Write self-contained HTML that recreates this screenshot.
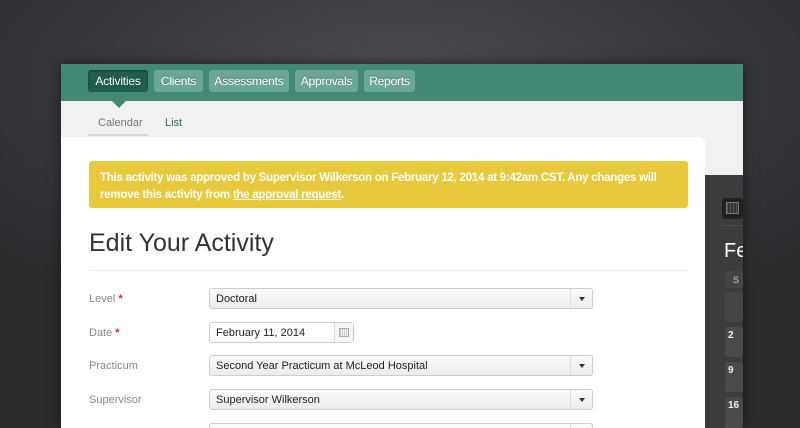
<!DOCTYPE html>
<html><head><style>
*{margin:0;padding:0;box-sizing:border-box}
html{width:800px;height:428px;overflow:hidden}
body{width:800px;height:428px;overflow:hidden;position:relative;font-family:"Liberation Sans",Arial,sans-serif;background:radial-gradient(ellipse 70% 60% at 50% 20%,#4a4c4f,#35373a 60%,#2b2c2e)}
.win{position:absolute;left:61px;top:64px;width:682px;height:364px;background:#f1f1f1;box-shadow:0 0 12px rgba(0,0,0,.5);overflow:hidden}
.nav{height:37px;background:#428a76;position:relative}
.btn{position:absolute;top:6px;height:22px;border-radius:3px;background:#6aa797;color:#fff;font-size:12px;line-height:23px;text-align:center;text-shadow:0 -1px 0 rgba(0,0,0,.3);letter-spacing:-0.2px}
.btn.on{background:#1f5e4c;box-shadow:inset 0 1px 2px rgba(0,0,0,.4)}
.arrow{position:absolute;left:51px;top:37px;width:0;height:0;border-left:7px solid transparent;border-right:7px solid transparent;border-top:7px solid #428a76}
.sub{position:absolute;top:53px;font-size:11px}
.uline{position:absolute;left:27px;top:70px;width:60px;height:2px;background:#d8d8d8}
.dark{position:absolute;left:644px;top:111px;width:38px;height:253px;background:#3b3c3e}
.card{position:absolute;left:0;top:73px;width:644px;height:291px;background:#fff;border-radius:0 6px 0 0}
.alert{position:absolute;left:28px;top:24px;width:599px;height:47px;background:#e8c93c;border-radius:3px;color:#fff;font-size:11.5px;font-weight:bold;padding:9px 11px 0;line-height:17px;letter-spacing:-0.25px}
h1{position:absolute;left:28px;top:92px;font-size:25px;font-weight:normal;color:#333}
.hr{position:absolute;left:28px;top:133px;width:599px;height:1px;background:#eee}
.lbl{position:absolute;left:28px;font-size:11px;color:#888}
.lbl b{color:#d22;font-weight:bold}
.sel{position:absolute;left:148px;width:384px;height:21px;border:1px solid #ccc;border-radius:3px;background:linear-gradient(#fafafa,#ececec);font-size:11px;color:#222;line-height:20px;padding-left:6px}
.sel:after{content:"";position:absolute;right:7px;top:8px;border-left:3px solid transparent;border-right:3px solid transparent;border-top:4px solid #333}
.sel:before{content:"";position:absolute;right:21px;top:0;width:1px;height:19px;background:#ddd}
</style></head><body>
<div class="win">
<div class="nav">
<div class="btn on" style="left:27px;width:60px">Activities</div>
<div class="btn" style="left:93px;width:49px">Clients</div>
<div class="btn" style="left:148px;width:80px">Assessments</div>
<div class="btn" style="left:234px;width:63px">Approvals</div>
<div class="btn" style="left:303px;width:51px">Reports</div>
</div>
<div class="arrow"></div>
<div class="sub" style="left:37px;color:#777">Calendar</div>
<div class="sub" style="left:104px;color:#2d6b57">List</div>
<div class="uline"></div>
<div class="dark">
<div style="position:absolute;left:17px;top:23px;width:21px;height:21px;background:#222;border-radius:3px"><div style="margin:4px;width:13px;height:12px;border:1px solid #777;background:repeating-linear-gradient(90deg,#555 0 1px,transparent 1px 3px),#333"></div></div>
<div style="position:absolute;left:17px;top:50px;width:21px;height:1px;background:#4a4b4d"></div>
<div style="position:absolute;left:19px;top:65px;color:#fff;font-size:20px">Fe</div>
<div style="position:absolute;left:20px;top:96px;width:18px;height:17px;background:#444;border-radius:3px;color:#ccc;font-size:9px;padding:4px 0 0 8px">S</div>
<div style="position:absolute;left:20px;top:117px;width:18px;height:30px;background:#444;border-radius:3px"></div>
<div style="position:absolute;left:20px;top:152px;width:18px;height:30px;background:#4a4a4c;border-radius:3px;color:#eee;font-size:10px;font-weight:bold;padding:3px">2</div>
<div style="position:absolute;left:20px;top:187px;width:18px;height:30px;background:#4a4a4c;border-radius:3px;color:#eee;font-size:10px;font-weight:bold;padding:3px">9</div>
<div style="position:absolute;left:20px;top:222px;width:18px;height:31px;background:#4a4a4c;border-radius:3px;color:#eee;font-size:10px;font-weight:bold;padding:3px">16</div>
</div>
<div class="card">
<div class="alert">This activity was approved by Supervisor Wilkerson on February 12, 2014 at 9:42am CST. Any changes will remove this activity from <u>the approval request</u>.</div>
<h1>Edit Your Activity</h1>
<div class="hr"></div>
<div class="lbl" style="top:156px">Level <b>*</b></div>
<div class="sel" style="top:151px">Doctoral</div>
<div class="lbl" style="top:190px">Date <b>*</b></div>
<div style="position:absolute;left:148px;top:185px;width:145px;height:21px;border:1px solid #ccc;border-radius:3px;font-size:11px;line-height:20px;padding-left:6px;color:#222">February 11, 2014<div style="position:absolute;right:0;top:0;width:19px;height:19px;border-left:1px solid #ddd;background:#f5f5f5"><div style="margin:5px 4px;width:10px;height:9px;border:1px solid #aaa;background:repeating-linear-gradient(90deg,#ccc 0 1px,transparent 1px 2px)"></div></div></div>
<div class="lbl" style="top:223px">Practicum</div>
<div class="sel" style="top:218px">Second Year Practicum at McLeod Hospital</div>
<div class="lbl" style="top:257px">Supervisor</div>
<div class="sel" style="top:252px">Supervisor Wilkerson</div>
<div class="sel" style="top:286px"></div>
</div>
</div>
</body></html>
